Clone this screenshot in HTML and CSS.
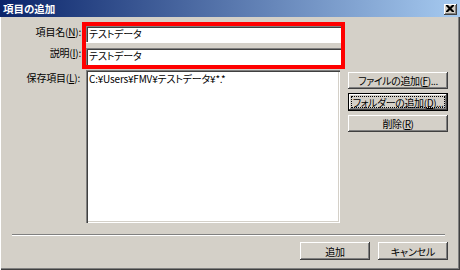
FILE: index.html
```html
<!DOCTYPE html>
<html lang="ja">
<head>
<meta charset="utf-8">
<link rel="stylesheet" href="styles.css">
</head>
<body>
<div class="window">
  <div class="titlebar">
    <span class="title">項目の追加</span>
    <span class="close"><svg width="8" height="7" viewBox="0 0 8 7"><path d="M0 0h2l2 2 2-2h2v1L5.5 3.5 8 6v1H6L4 5 2 7H0V6l2.5-2.5L0 1z" fill="#000"/></svg></span>
  </div>
  <div class="client">
    <div class="main">
      <div class="fields">
        <div class="row-top">
          <div class="labels">
            <div class="label l1">項目名(<u>N</u>):</div>
            <div class="label l2">説明(<u>I</u>):</div>
          </div>
          <div class="redbox">
            <div class="input i1">テストデータ</div>
            <div class="gap"></div>
            <div class="input i2">テストデータ</div>
          </div>
        </div>
        <div class="row-list">
          <div class="label l3">保存項目(<u>L</u>):</div>
          <div class="listbox"><div class="item">C:¥Users¥FMV¥テストデータ¥*.*</div></div>
        </div>
      </div>
      <div class="side">
        <div class="btn">ファイルの追加(<u>F</u>)...</div>
        <div class="btn default"><span class="focus">フォルダーの追加(<u>D</u>)...</span></div>
        <div class="btn">削除(<u>R</u>)</div>
      </div>
    </div>
    <div class="separator"></div>
    <div class="footer">
      <div class="btn fbtn">追加</div>
      <div class="btn fbtn">キャンセル</div>
    </div>
  </div>
</div>
</body>
</html>
```

FILE: styles.css
```css
* { box-sizing: border-box; }
html, body { margin: 0; padding: 0; background: #d4d0c8; }
body {
  font-family: "Noto Sans CJK JP", "Noto Sans", sans-serif;
  font-size: 10px;
  letter-spacing: -0.2px;
  font-feature-settings: "palt";
  color: #000;
}
.window {
  width: 460px;
  height: 270px;
  background: #d4d0c8;
  box-shadow: inset 1px 0 #ffffff, inset -1px -1px #404040, inset -2px -2px #808080;
  display: flex;
  flex-direction: column;
}
.titlebar {
  height: 17px;
  background: linear-gradient(to right, #0a246a, #a6caf0);
  display: flex;
  align-items: center;
  justify-content: space-between;
  padding: 0 3px 0 3px;
}
.title {
  color: #fff;
  font-weight: bold;
  font-size: 10.5px;
  letter-spacing: 0;
  line-height: 13px;
}
.close {
  width: 13px;
  height: 11px;
  background: #d4d0c8;
  box-shadow: inset -1px -1px #404040, inset 1px 1px #ffffff, inset -2px -2px #808080;
  display: flex;
  align-items: center;
  justify-content: center;
  margin-top: 1px;
}
.close svg { display: block; margin: 0 1px 1px 0; }
.client {
  flex: 1;
  display: flex;
  flex-direction: column;
}
.main {
  display: flex;
  margin-top: 5px;
}
.fields {
  width: 345px;
  display: flex;
  flex-direction: column;
}
.row-top { display: flex; }
.labels {
  width: 82px;
  display: flex;
  flex-direction: column;
  align-items: flex-end;
  padding-right: 1px;
}
.label {
  line-height: 13px;
  white-space: nowrap;
}
.l1 { margin-top: 3px; }
.l2 { margin-top: 8px; }
.redbox {
  width: 263px;
  height: 47px;
  border: 4px solid #ff0000;
  display: flex;
  flex-direction: column;
}
.input {
  background: #fff;
  box-shadow: inset 1px 1px #808080, inset 2px 2px #404040;
  padding: 1px 0 0 3px;
  line-height: 13px;
  white-space: nowrap;
}
.i1 { height: 16px; }
.i2 { height: 17px; }
.gap {
  height: 6px;
  background: #d4d0c8;
  box-shadow: inset 0 1px #ffffff;
}
.row-list {
  display: flex;
  margin-top: 1px;
}
.l3 {
  width: 86px;
  padding-right: 6px;
  text-align: right;
  padding-top: 1px;
}
.listbox {
  width: 254px;
  height: 153px;
  background: #fff;
  box-shadow: inset 1px 1px #808080, inset 2px 2px #404040, inset -1px -1px #ffffff, inset -2px -2px #d4d0c8;
  padding: 2px 0 0 3px;
}
.item { line-height: 13px; white-space: nowrap; }
.side {
  width: 100px;
  margin-left: 3px;
  margin-top: 50px;
  display: flex;
  flex-direction: column;
  gap: 4px;
}
.btn {
  height: 17px;
  background: #d4d0c8;
  box-shadow: inset -1px -1px #404040, inset 1px 1px #ffffff, inset -2px -2px #808080, inset 2px 2px #d4d0c8;
  display: flex;
  align-items: center;
  justify-content: center;
  line-height: 13px;
  white-space: nowrap;
}
.side .btn { letter-spacing: -0.4px; }
.btn.default {
  border: 1px solid #000;
  height: 18px;
  box-shadow: inset -1px -1px #404040, inset 1px 1px #ffffff, inset -2px -2px #808080;
  padding: 3px;
}
.focus {
  flex: 1;
  height: 100%;
  outline: 1px dotted #000;
  display: flex;
  align-items: center;
  justify-content: center;
}
.separator {
  margin: 11px 0 0 12px;
  width: 433px;
  height: 2px;
  border-top: 1px solid #808080;
  border-bottom: 1px solid #ffffff;
}
.footer {
  display: flex;
  justify-content: flex-end;
  gap: 8px;
  padding-right: 12px;
  margin-top: 6px;
}
.fbtn { width: 70px; height: 18px; }
```
